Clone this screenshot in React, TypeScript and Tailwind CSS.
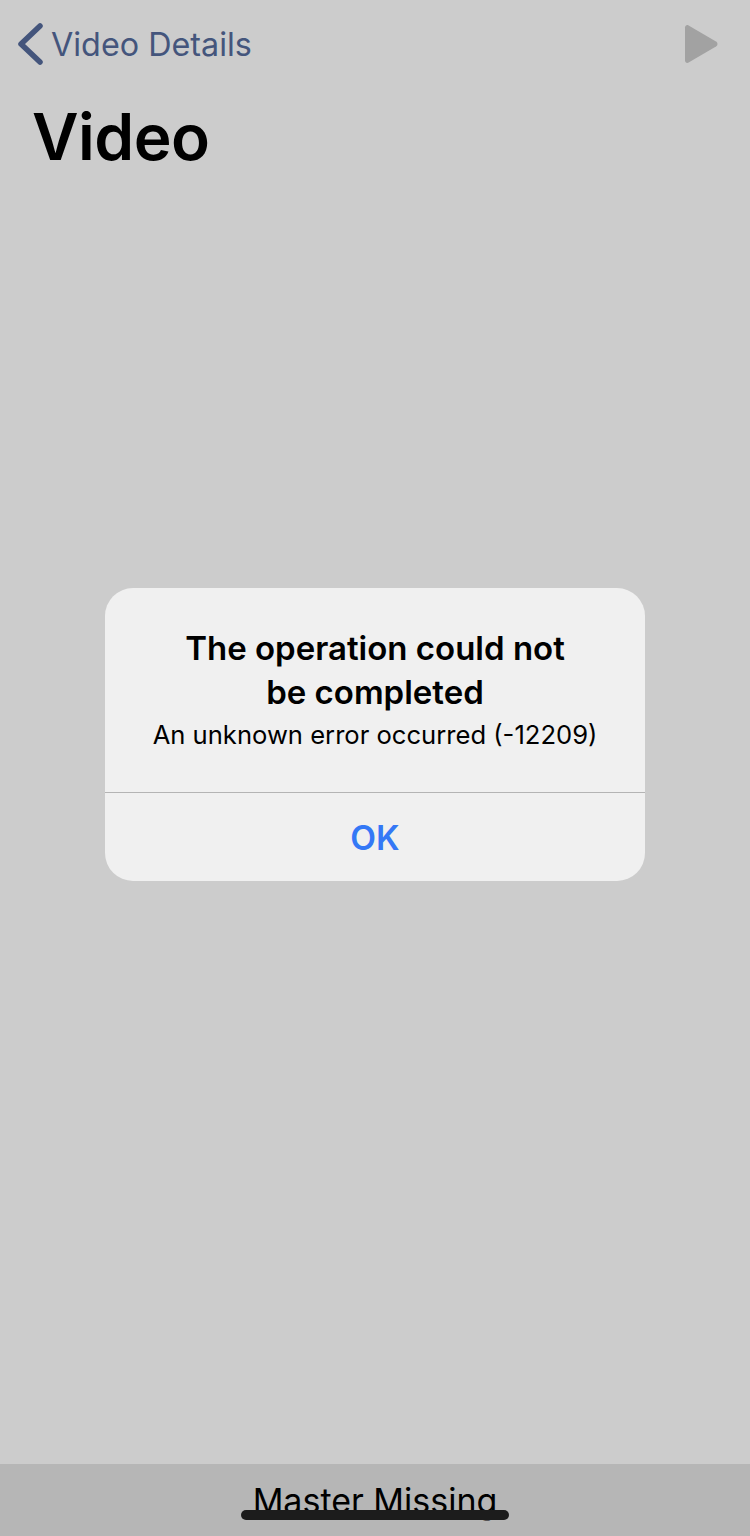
const FONT = "font-['Inter','Noto_Sans',sans-serif]";

const BackChevron = () => (
    <svg width="28" height="44" viewBox="0 0 28 44" fill="none" className="shrink-0">
        <path d="M24 4 L5 22 L24 40" stroke="#44557c" strokeWidth="5.5" strokeLinecap="round" strokeLinejoin="round" />
    </svg>
);

const PlayIcon = () => (
    <svg width="36" height="40" viewBox="0 0 36 40" fill="#a2a2a2">
        <path d="M2 3.5 C2 1.5 4 0.5 5.6 1.4 L33 17.5 C35 18.7 35 21.3 33 22.5 L5.6 38.6 C4 39.5 2 38.5 2 36.5 Z" />
    </svg>
);

export default function App() {
    return (
        <div className={`relative flex h-[1536px] w-[750px] flex-col overflow-hidden bg-[#cccccc] ${FONT}`}>
            <header className="flex h-[88px] shrink-0 items-center justify-between pl-[16px] pr-[31px]">
                <div className="flex items-center gap-[7px]">
                    <BackChevron />
                    <span className="pt-[2px] text-[32.3px] leading-none text-[#44557c]">Video Details</span>
                </div>
                <PlayIcon />
            </header>

            <h1 className="pl-[32px] pt-[1px] text-[64px] font-semibold leading-[96px] tracking-[-0.5px] text-black">Video</h1>

            <div className="grow" />

            <footer className="flex h-[72px] shrink-0 justify-center bg-[#b6b6b6]">
                <span className="mt-[15px] text-[34px] leading-[44px] text-black">Master Missing</span>
            </footer>

            <div className="absolute bottom-[16px] left-[241px] h-[10px] w-[268px] rounded-full bg-[#1c1c1c]" />

            <div className="absolute left-[105px] top-[588px] flex h-[293px] w-[540px] flex-col rounded-[28px] bg-[#f0f0f0]">
                <div className="flex h-[205px] shrink-0 flex-col items-center border-b border-[#b4b4b4] pt-[38px] text-center">
                    <p className="text-[33px] font-semibold leading-[44px] text-black">
                        The operation could not
                        <br />
                        be completed
                    </p>
                    <p className="mt-[1px] text-[25.6px] leading-[40px] text-black">An unknown error occurred (-12209)</p>
                </div>
                <div className="flex grow items-center justify-center pt-[3px]">
                    <span className="text-[33.5px] font-semibold leading-none text-[#3478f6]">OK</span>
                </div>
            </div>
        </div>
    );
}
